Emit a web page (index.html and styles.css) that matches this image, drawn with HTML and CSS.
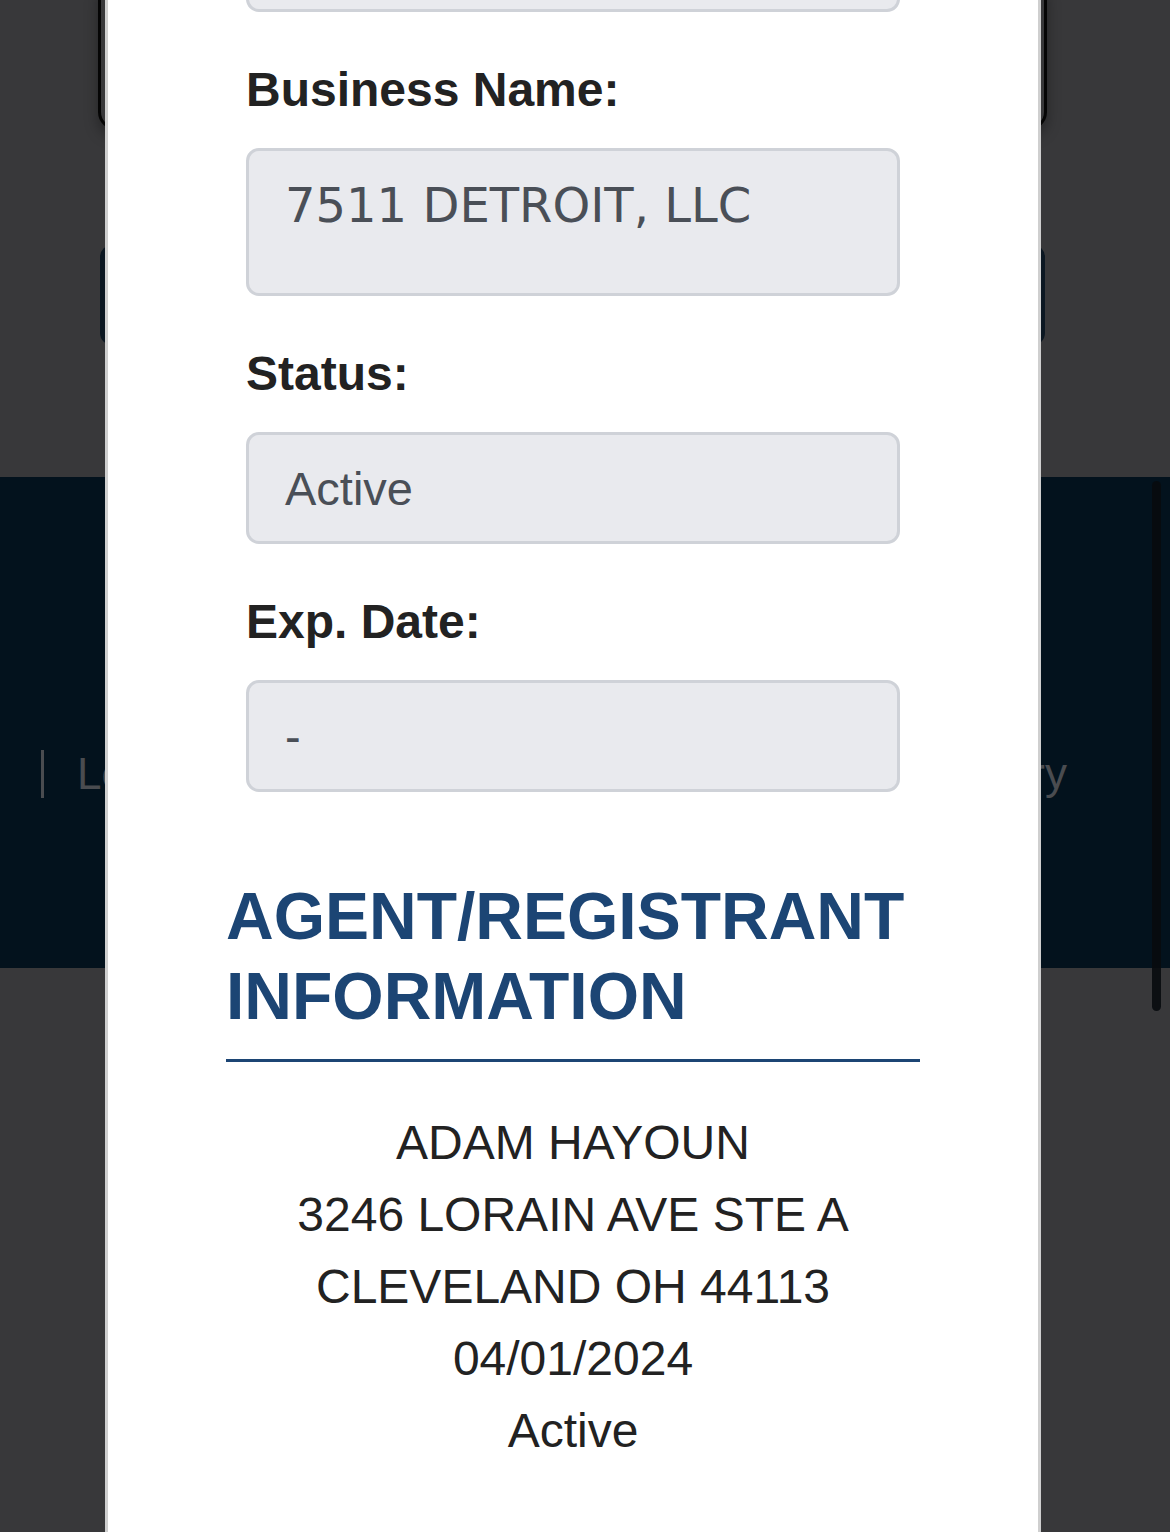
FILE: index.html
```html
<!DOCTYPE html>
<html lang="en">
<head>
    <meta charset="UTF-8">
    <meta name="viewport" content="width=device-width, initial-scale=1.0">
    <title>Business Search - Details</title>
    <link rel="stylesheet" href="styles.css">
</head>
<body>
    <!-- page behind the modal -->
    <div class="page">
        <div class="page-top">
            <div class="search-card"></div>
            <div class="search-button"></div>
        </div>

        <div class="page-band">
            <nav class="band-nav">
                <span class="band-divider"></span>
                <a class="band-link">Legal</a>
                <a class="band-link">Directory</a>
            </nav>
        </div>
    </div>

    <div class="scroll-indicator"></div>

    <!-- details modal -->
    <div class="modal">
        <div class="modal-body">
            <!-- previous field, scrolled out of view -->
            <div class="field">
                <div class="field-input"></div>
            </div>

            <div class="field">
                <label class="field-label">Business Name:</label>
                <div class="field-input field-textarea">7511 DETROIT, LLC</div>
            </div>

            <div class="field">
                <label class="field-label">Status:</label>
                <div class="field-input">Active</div>
            </div>

            <div class="field">
                <label class="field-label">Exp. Date:</label>
                <div class="field-input">-</div>
            </div>

            <h2 class="section-title">AGENT/REGISTRANT INFORMATION</h2>

            <div class="agent-info">
                <div>ADAM HAYOUN</div>
                <div>3246 LORAIN AVE STE A</div>
                <div>CLEVELAND OH 44113</div>
                <div>04/01/2024</div>
                <div>Active</div>
            </div>
        </div>
    </div>
</body>
</html>
```

FILE: styles.css
```css
* {
    margin: 0;
    padding: 0;
    box-sizing: border-box;
}

html, body {
    height: 100%;
}

body {
    font-family: 'Liberation Sans', Arial, sans-serif;
    background: #38383a;
    overflow: hidden;
    position: relative;
}

/* background page */

.page-top {
    display: flow-root;
    height: 477px;
    padding: 0 123px 0 98px;
}

.search-card {
    height: 150px;
    margin-top: -20px;
    border: 3px solid #050505;
    border-radius: 18px;
    box-shadow: 0 6px 14px rgba(0, 0, 0, 0.35);
}

.search-button {
    height: 100px;
    margin: 115px 2px 0 2px;
    background: #0b1722;
    border-radius: 12px;
}

.page-band {
    height: 491px;
    background: #03121d;
    display: flex;
    align-items: center;
}

.band-nav {
    flex: 1;
    display: flex;
    align-items: center;
    padding: 0 103px 0 41px;
    font-size: 44px;
    color: #4a4c50;
    margin-top: 102px;
}

.band-divider {
    width: 3px;
    height: 48px;
    background: #4a4c50;
    margin-right: 33px;
}

.band-link {
    flex: 1;
}

.band-link:last-child {
    text-align: right;
}

.scroll-indicator {
    position: absolute;
    top: 481px;
    left: 1152px;
    width: 9px;
    height: 530px;
    border-radius: 5px;
    background: #080b0e;
    opacity: 0.9;
}

/* modal */

.modal {
    position: absolute;
    top: 0;
    bottom: 0;
    left: 105px;
    width: 936px;
    background: #fff;
    border-left: 3px solid #cfcfcf;
    border-right: 3px solid #cfcfcf;
    overflow: hidden;
}

.modal-body {
    margin-top: -100px;
    padding: 0 118px;
}

.field {
    margin: 0 20px 50px 20px;
}

.field-label {
    display: block;
    font-size: 48px;
    font-weight: 700;
    line-height: 56px;
    color: #222;
    margin-bottom: 30px;
}

.field-input {
    height: 112px;
    display: flex;
    align-items: center;
    padding: 0 36px;
    background: #e9eaee;
    border: 3px solid #cfd2d8;
    border-radius: 13px;
    font-size: 47px;
    color: #4a4f57;
}

.field-textarea {
    height: 148px;
    align-items: flex-start;
    padding-top: 26px;
    font-family: 'DejaVu Sans', Verdana, sans-serif;
    font-size: 48px;
}

.section-title {
    margin-top: 84px;
    padding-bottom: 23px;
    border-bottom: 3px solid #1c4574;
    font-size: 66px;
    line-height: 80px;
    font-weight: 700;
    color: #1c4574;
}

.agent-info {
    margin-top: 45px;
    text-align: center;
    font-size: 48px;
    line-height: 72px;
    color: #222;
}
```
